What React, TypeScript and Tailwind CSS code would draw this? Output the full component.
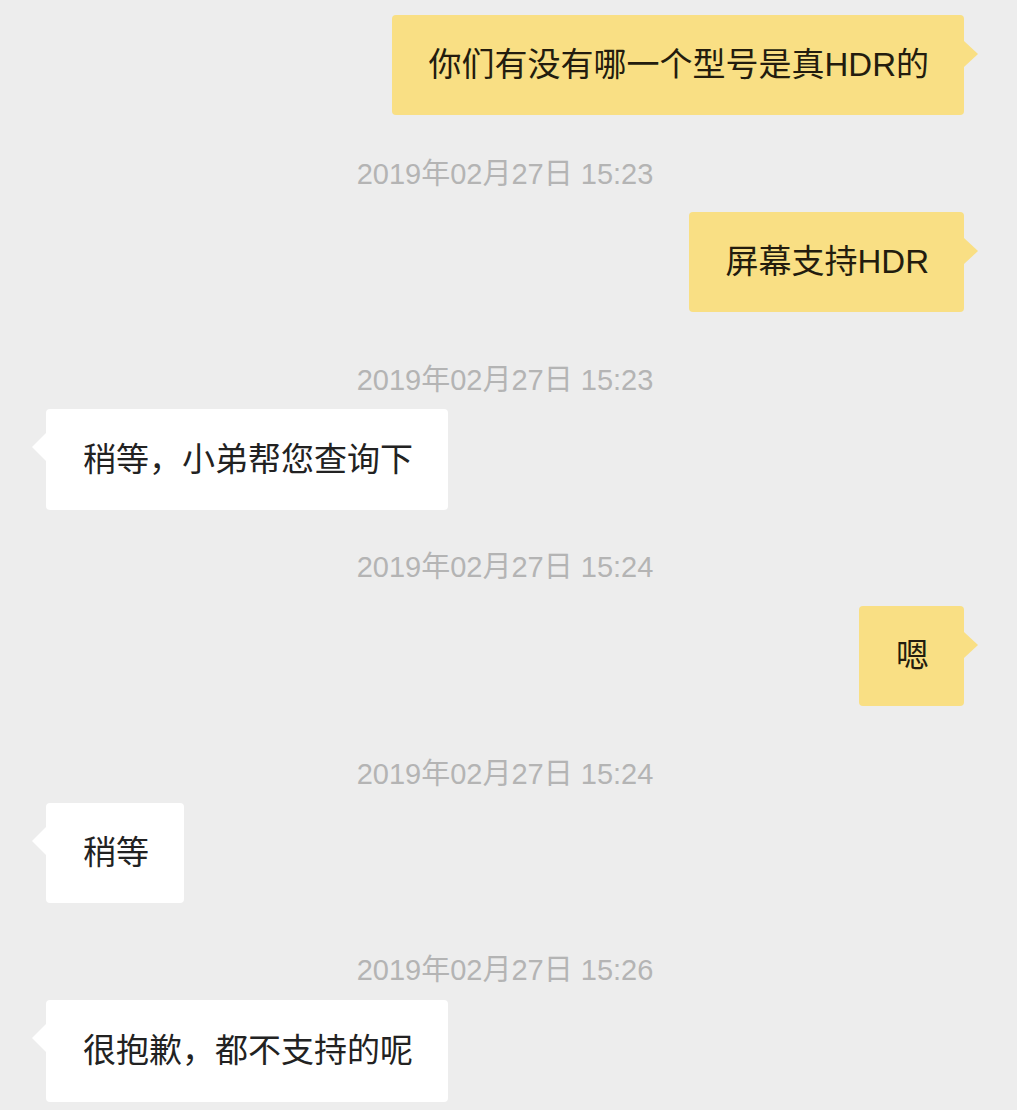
import React from "react";

type Item =
  | { kind: "time"; text: string; mt: string }
  | { kind: "me" | "them"; text: string; mt: string; h?: string };

const items: Item[] = [
  { kind: "me", text: "你们有没有哪一个型号是真HDR的", mt: "mt-[15px]" },
  { kind: "time", text: "2019年02月27日 15:23", mt: "mt-[40px]" },
  { kind: "me", text: "屏幕支持HDR", mt: "mt-[17px]" },
  { kind: "time", text: "2019年02月27日 15:23", mt: "mt-[49px]" },
  { kind: "them", text: "稍等，小弟帮您查询下", mt: "mt-[8px]", h: "h-[101px]" },
  { kind: "time", text: "2019年02月27日 15:24", mt: "mt-[38px]" },
  { kind: "me", text: "嗯", mt: "mt-[18px]" },
  { kind: "time", text: "2019年02月27日 15:24", mt: "mt-[49px]" },
  { kind: "them", text: "稍等", mt: "mt-[8px]" },
  { kind: "time", text: "2019年02月27日 15:26", mt: "mt-[48px]" },
  { kind: "them", text: "很抱歉，都不支持的呢", mt: "mt-[9px]", h: "h-[102px]" },
];

const font = { fontFamily: '"Liberation Sans", "Noto Sans CJK SC", sans-serif' };

const Bubble = ({ item }: { item: Extract<Item, { kind: "me" | "them" }> }) => {
  const mine = item.kind === "me";
  return (
    <div className={`flex ${mine ? "justify-end pr-[53px]" : "justify-start pl-[46px]"} ${item.mt}`}>
      <div
        className={`relative flex items-center pl-[37px] pr-[35px] rounded-[4px] text-[33px] whitespace-nowrap ${item.h ?? "h-[100px]"} ${
          mine ? "bg-[#f9df84] text-[#231c0e]" : "bg-white text-[#222222]"
        }`}
      >
        {item.text}
        {mine ? (
          <span className="absolute left-full top-[26px] w-0 h-0 border-y-[13px] border-y-transparent border-l-[14px] border-l-[#f9df84]" />
        ) : (
          <span className="absolute right-full top-[24px] w-0 h-0 border-y-[14px] border-y-transparent border-r-[14px] border-r-white" />
        )}
      </div>
    </div>
  );
};

const App = () => {
  return (
    <div className="min-h-screen h-[1110px] overflow-hidden bg-[#ededed]" style={font}>
      <div className="flex flex-col">
        {items.map((item, i) =>
          item.kind === "time" ? (
            <div
              key={i}
              className={`h-[40px] flex items-center justify-center pr-[7px] text-[29px] text-[#b4b4b4] ${item.mt}`}
            >
              {item.text}
            </div>
          ) : (
            <Bubble key={i} item={item} />
          )
        )}
      </div>
    </div>
  );
};

export default App;
